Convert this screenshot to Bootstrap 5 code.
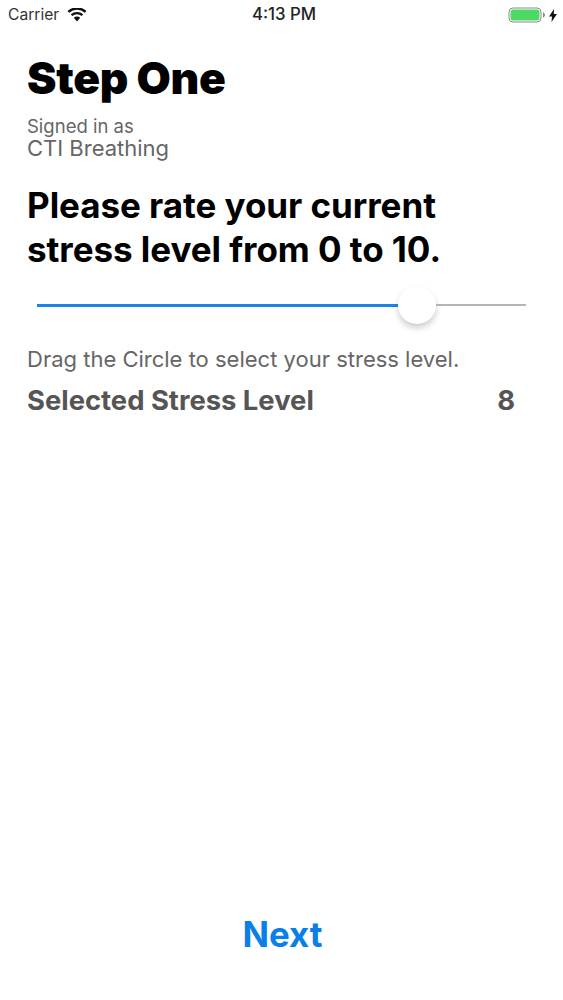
<!DOCTYPE html>
<html lang="en"><head><meta charset="utf-8">
<link rel="stylesheet" href="https://cdn.jsdelivr.net/npm/bootstrap@5.3.0/dist/css/bootstrap.min.css">
<style>
html,body{height:1000px;overflow:hidden;background:#fff}
body{font-family:Inter,"Liberation Sans",sans-serif;color:#000}
.phone{height:1000px}
.sbar{height:29px;padding:1px 6px 0 8px;font-size:15.600px;color:#333}
.sbar .tm{font-weight:500;font-size:16.800px;color:#222;padding-left:3px}
.sleft,.sright{width:120px}
.main{padding:0 27px}
.ttl{font-size:44.300px;font-weight:900;line-height:46px;margin:26px 0 0;letter-spacing:-.3px}
.sub1{font-size:18.500px;line-height:19px;color:#666;margin-top:16px}
.sub2{font-size:22px;line-height:24px;color:#666}
.ask{font-size:35px;font-weight:700;line-height:44px;margin:23px 0 0;letter-spacing:-.05px}
.track{height:38px;margin:15px 10px 0;align-items:center}
.fill{height:3px;background:#1a84ea}
.rest{height:2px;background:#b5b5b5}
.knob{width:38px;height:38px;border-radius:50%;background:#fff;box-shadow:0 4px 6px rgba(0,0,0,.2);flex:none}
.hint{font-size:22px;line-height:26px;color:#666;margin-top:22px}
.lvl{font-size:27.400px;font-weight:700;color:#555;line-height:32px;margin-top:12px;padding-right:21px}
.nextb{font-size:34.800px;font-weight:700;color:#0a7fe8;line-height:40px;padding:0 0 46px 2px}
</style></head><body>
<div class="phone d-flex flex-column">
<div class="sbar d-flex justify-content-between align-items-center">
<div class="sleft d-flex align-items-center gap-2"><span>Carrier</span>
<svg width="20" height="14" viewBox="0 0 20 14"><path d="M10 13.500 L6.800 9.800a4.600 4.600 0 0 1 6.400 0Z M5.300 8a7 7 0 0 1 9.400 0l1.500-1.700a9.300 9.300 0 0 0-12.400 0Z M2.200 4.700a11.700 11.700 0 0 1 15.600 0L19.500 3a14 14 0 0 0-19 0Z" fill="#111"/></svg></div>
<div class="tm">4:13 PM</div>
<div class="sright d-flex align-items-center justify-content-end gap-1">
<svg width="37" height="16" viewBox="0 0 37 16"><rect x="1" y="1" width="32" height="14" rx="4" fill="none" stroke="#8a8a8a"/><rect x="2.500" y="2.500" width="29" height="11" rx="2.500" fill="#4cd964"/><path d="M35 5.500c1.200.3 2 1.300 2 2.500s-.8 2.200-2 2.500Z" fill="#8a8a8a"/></svg>
<svg width="8" height="13" viewBox="0 0 8 13"><path d="M5 0 0 7.500h3L2.500 13 8 5H4.800Z" fill="#111"/></svg>
</div></div>
<div class="main flex-grow-1 d-flex flex-column">
<h1 class="ttl">Step One</h1>
<div class="sub1">Signed in as</div>
<div class="sub2">CTI Breathing</div>
<div class="ask">Please rate your current<br>stress level from 0 to 10.</div>
<div class="track d-flex">
<div class="fill flex-grow-1"></div><div class="knob"></div><div class="rest" style="width:90px"></div>
</div>
<div class="hint">Drag the Circle to select your stress level.</div>
<div class="lvl d-flex justify-content-between"><span>Selected Stress Level</span><span>8</span></div>
<div class="nextb mt-auto text-center">Next</div>
</div></div>
</body></html>
